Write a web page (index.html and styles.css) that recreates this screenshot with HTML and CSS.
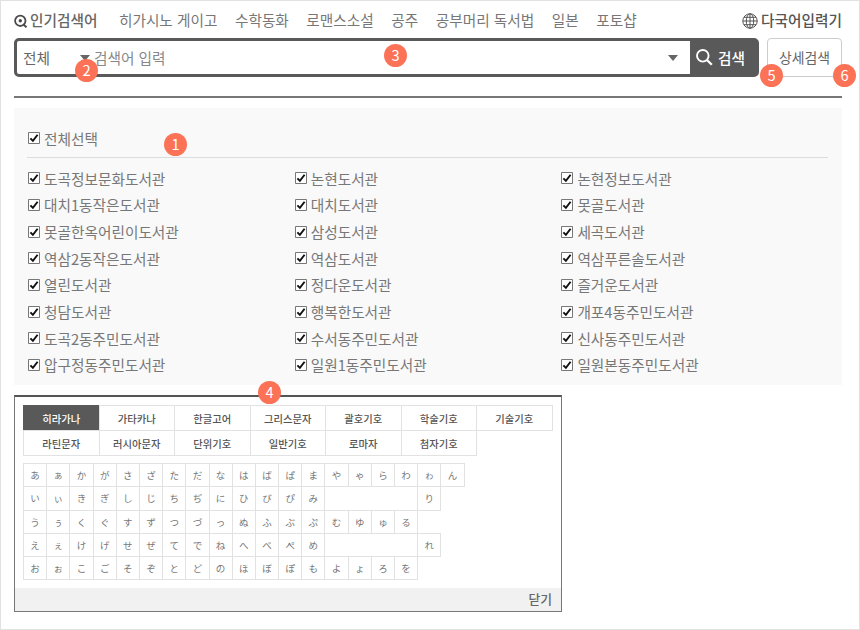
FILE: index.html
```html
<!DOCTYPE html>
<html lang="ko">
<head>
<meta charset="utf-8">
<title>도서관 통합검색</title>
<link rel="stylesheet" href="styles.css">
</head>
<body>
<div class="page">
  <header class="top">
    <svg class="hot-icon" width="14" height="15" viewBox="0 0 14 15" fill="none" stroke="#4a4a4a"><circle cx="6.3" cy="6.8" r="5.2" stroke-width="1.8"/><circle cx="6.3" cy="6.8" r="1.7" fill="#4a4a4a" stroke="none"/><path d="M9.2 10.2l3.3 3" stroke-width="2"/></svg>
    <strong class="hot-title">인기검색어</strong>
    <nav class="keywords"><a>히가시노 게이고</a><a>수학동화</a><a>로맨스소설</a><a>공주</a><a>공부머리 독서법</a><a>일본</a><a>포토샵</a></nav>
    <div class="ime">
      <svg width="16" height="16" viewBox="0 0 16 16" fill="none" stroke="#555" stroke-width="1"><circle cx="8" cy="8" r="7.2"/><ellipse cx="8" cy="8" rx="3.7" ry="7.2"/><path d="M8 .8v14.4M.8 8h14.4M2 4.3h12M2 11.7h12"/></svg>
      <strong>다국어입력기</strong>
    </div>
  </header>

  <div class="search-row">
    <div class="search">
      <span class="scope">전체</span>
      <svg class="arrow" width="10" height="6" viewBox="0 0 10 6"><path d="M0 0h10L5 6z" fill="#666"/></svg>
      <span class="placeholder">검색어 입력</span>
      <svg class="arrow arrow-end" width="10" height="6" viewBox="0 0 10 6"><path d="M0 0h10L5 6z" fill="#666"/></svg>
      <div class="go">
        <svg width="17" height="17" viewBox="0 0 17 17" fill="none" stroke="#fff"><circle cx="6.8" cy="6.8" r="5.8" stroke-width="1.9"/><path d="M11 11l4.8 4.8" stroke-width="2.3"/></svg>
        <strong>검색</strong>
      </div>
    </div>
    <div class="detail">상세검색</div>
  </div>

  <section class="libraries">
    <div class="all"><label class="item"><i class="check"></i>전체선택</label></div>
    <div class="list" id="list"></div>
  </section>

  <section class="keyboard">
    <div class="tabs" id="tabs"></div>
    <div class="kana" id="kana"></div>
    <footer class="close">닫기</footer>
  </section>

  <span class="badge b1">1</span>
  <span class="badge b2">2</span>
  <span class="badge b3">3</span>
  <span class="badge b4">4</span>
  <span class="badge b5">5</span>
  <span class="badge b6">6</span>
</div>
<script src="app.js"></script>
</body>
</html>
```
FILE: styles.css
```css
* { box-sizing: border-box; }
body {
  margin: 0;
  font-family: "Noto Sans CJK KR", "Noto Sans", sans-serif;
  font-size: 14.67px;
  color: #777;
  background: #fff;
}
.page {
  position: relative;
  width: 860px;
  height: 630px;
  padding: 0 17px 0 13px;
  border: 1px solid #e1e1e1;
  overflow: hidden;
}
svg { display: block; flex: none; }
strong { font-weight: 500; }

.top { display: flex; align-items: center; height: 37px; line-height: 37px; white-space: nowrap; }
.hot-icon { margin: 3px 2px 0 0; }
.hot-title { color: #666; }
.keywords { display: flex; gap: 17.5px; margin-left: 21.5px; }
.ime { display: flex; align-items: center; gap: 3px; margin-left: auto; color: #555; }
.ime svg { margin-top: 3px; }

.search-row { display: flex; gap: 8px; height: 39px; }
.search {
  display: flex;
  align-items: center;
  width: 745px;
  border: 3px solid #595959;
  border-radius: 5px;
}
.scope { width: 63px; padding-left: 6px; color: #666; }
.placeholder { margin-left: 4px; color: #888; }
.arrow-end { margin-left: auto; margin-right: 12px; }
.go {
  display: flex;
  align-items: center;
  gap: 5px;
  align-self: stretch;
  width: 66px;
  padding-left: 6px;
  background: #595959;
  color: #fff;
}
.detail {
  width: 75px;
  border: 1px solid #ccc;
  border-radius: 4px;
  line-height: 37px;
  text-align: center;
  font-size: 13.9px;
  color: #666;
}

.libraries {
  height: 289px;
  margin-top: 19px;
  padding: 10px 0 0;
  border-top: 2px solid #777;
}
.all {
  height: 50px;
  padding: 17px 0 0 14px;
  background: linear-gradient(#ddd, #ddd) 13px 100% / 801px 1px no-repeat, #f9f9f9;
}
.list {
  display: grid;
  grid-template-columns: repeat(3, 266.7px);
  grid-auto-rows: 26.67px;
  height: 227px;
  padding: 7px 0 0 14px;
  background: #f9f9f9;
}
.item { display: flex; align-items: center; height: 26.67px; white-space: nowrap; }
.check { width: 12px; height: 12px; margin-right: 4px; }
.check svg { margin-top: 0; }

.keyboard {
  display: flex;
  flex-direction: column;
  width: 548px;
  height: 217px;
  margin-top: 10px;
  padding: 8px 0 0;
  border: 1px solid #777;
  border-top: 2px solid #555;
}
.tabs {
  display: grid;
  grid-template-columns: repeat(7, 75.5px);
  grid-auto-rows: 25px;
  margin-left: 8px;
}
.tab, .key {
  display: flex;
  align-items: center;
  justify-content: center;
  margin: 0 -1px -1px 0;
  border: 1px solid #e2e2e2;
}
.tab { font-size: 10.3px; font-weight: 500; color: #555; }
.tab.on { background: #595959; border-color: #595959; color: #fff; }
.kana {
  display: grid;
  grid-template-columns: repeat(19, 23.2px);
  grid-auto-rows: 23.25px;
  margin: 8px 0 0 8px;
}
.key { font-family: "Noto Sans CJK JP", sans-serif; font-size: 9.5px; color: #777; }
.gap { grid-column: span 4; }
.row-start { grid-column-start: 1; }
.close {
  height: 23px;
  margin-top: auto;
  padding-right: 9px;
  background: #f1f1f1;
  line-height: 22px;
  text-align: right;
  font-size: 12.8px;
  font-weight: 500;
  color: #666;
}

.badge {
  position: absolute;
  width: 23px;
  height: 23px;
  border-radius: 50%;
  background: #fb7256;
  color: #fff;
  font-size: 14.67px;
  line-height: 22px;
  text-align: center;
}
.b1 { left: 163px; top: 132px; }
.b2 { left: 74px; top: 58px; }
.b3 { left: 383px; top: 43px; }
.b4 { left: 257px; top: 380px; }
.b5 { left: 759px; top: 63px; }
.b6 { left: 832px; top: 63px; }
```
FILE: app.js
```js
const libraries = `도곡정보문화도서관 논현도서관 논현정보도서관
대치1동작은도서관 대치도서관 못골도서관
못골한옥어린이도서관 삼성도서관 세곡도서관
역삼2동작은도서관 역삼도서관 역삼푸른솔도서관
열린도서관 정다운도서관 즐거운도서관
청담도서관 행복한도서관 개포4동주민도서관
도곡2동주민도서관 수서동주민도서관 신사동주민도서관
압구정동주민도서관 일원1동주민도서관 일원본동주민도서관`.split(/\s+/);
document.getElementById('list').innerHTML =
  libraries.map(n => `<label class="item"><i class="check"></i>${n}</label>`).join('');

document.querySelectorAll('.check').forEach(c => {
  c.innerHTML = '<svg width="12" height="12" viewBox="0 0 12 12"><path d="M.5.5h11v11H.5z" fill="#fff" stroke="#777"/><path d="M2.4 6.3l2.5 2.6L9.6 2.7" fill="none" stroke="#111" stroke-width="1.9"/></svg>';
});

const tabs = '히라가나 가타카나 한글고어 그리스문자 괄호기호 학술기호 기술기호 라틴문자 러시아문자 단위기호 일반기호 로마자 첨자기호'.split(' ');
document.getElementById('tabs').innerHTML =
  tabs.map((t, i) => `<div class="tab${i ? '' : ' on'}">${t}</div>`).join('');

// "_" marks a blank cell spanning four keys
const rows = [
  'あぁかがさざただなはばぱまやゃらわゎん',
  'いぃきぎしじちぢにひびぴみ_り',
  'うぅくぐすずつづっぬふぶぷむゆゅる',
  'えぇけげせぜてでねへべぺめ_れ',
  'おぉこごそぞとどのほぼぽもよょろを'
];
document.getElementById('kana').innerHTML = rows.map(r =>
  [...r].map((k, i) => `<div class="key${i ? '' : ' row-start'}${k === '_' ? ' gap' : ''}">${k === '_' ? '' : k}</div>`).join('')
).join('');
```
